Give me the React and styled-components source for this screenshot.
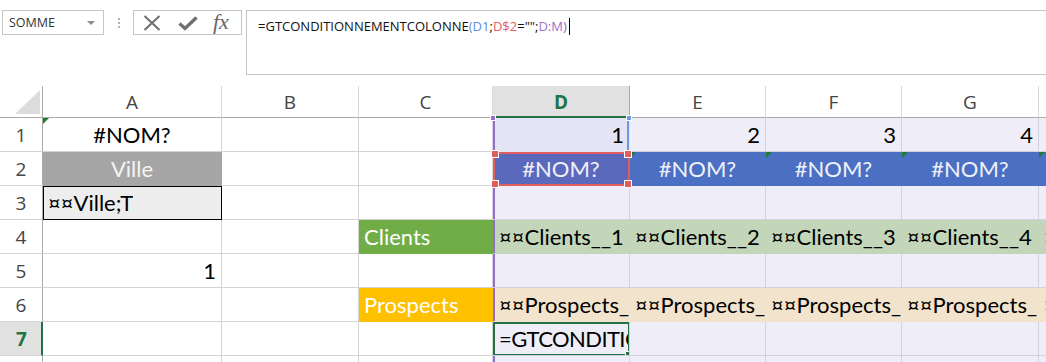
import React from 'react'
import styled, { createGlobalStyle } from 'styled-components'

const GlobalStyle = createGlobalStyle`
  html, body { margin:0; padding:0; background:#fff; overflow:hidden; }
  #root { width:1046px; height:362px; overflow:hidden; }
`

const TINT = '#efedf8'
const TINT_GRID = '#d3d0e2'
const GRID = '#d4d4d4'
const GREEN = '#217346'

const Page = styled.div`
  width:1046px;
  height:362px;
  display:flex;
  flex-direction:column;
  overflow:hidden;
`

//formula bar
const TopBar = styled.div`
  height:86px;
  flex:none;
  display:flex;
  align-items:flex-start;
  padding:10px 0 0 2px;
  box-sizing:border-box;
`
const NameBox = styled.div`
  width:102px;
  height:25px;
  border:1px solid #c6c6c6;
  box-sizing:border-box;
  display:flex;
  align-items:center;
  padding:0 8px 0 6px;
  font-family:"Open Sans", sans-serif;
  font-size:12.5px;
  color:#333;
  .arrow{
    margin-left:auto;
    width:0; height:0;
    border-left:4px solid transparent;
    border-right:4px solid transparent;
    border-top:4px solid #8a8a8a;
  }
`
const Grip = styled.div`
  width:29px;
  height:25px;
  display:flex;
  flex-direction:column;
  align-items:center;
  justify-content:center;
  gap:2px;
  span{ width:2px; height:2px; background:#b5b5b5; }
`
const FxBox = styled.div`
  width:109px;
  height:25px;
  border:1px solid #c6c6c6;
  box-sizing:border-box;
  display:flex;
  align-items:center;
  padding-left:9px;
  gap:16px;
  .fx{
    font-family:"Liberation Serif", serif;
    font-style:italic;
    font-size:22px;
    color:#666;
    line-height:1;
    margin-left:-2px;
    margin-top:-2px;
  }
`
const FormulaBox = styled.div`
  flex:1;
  height:65px;
  margin-left:4px;
  margin-right:-2px;
  border:1px solid #c6c6c6;
  box-sizing:border-box;
  padding:6px 11px;
  font-family:"Open Sans", sans-serif;
  font-size:13px;
  color:#111;
  white-space:nowrap;
  display:flex;
  align-items:flex-start;
`
const Ref = styled.span`
  color:${p => p.$c};
`
const Caret = styled.span`
  display:inline-block;
  width:1px;
  height:17px;
  background:#000;
  margin-left:2px;
  margin-top:1px;
`

//sheet
const Sheet = styled.div`
  display:grid;
  grid-template-columns:43px 179px 137px 134px 137px 136px 136px 137px 137px;
  grid-template-rows:32px repeat(8, 34px);
  width:1046px;
  overflow:hidden;
`
const Corner = styled.div`
  border-right:1px solid #ababab;
  border-bottom:1px solid #ababab;
  box-sizing:border-box;
  position:relative;
  &::after{
    content:'';
    position:absolute;
    right:2px; bottom:3px;
    width:0; height:0;
    border-left:25px solid transparent;
    border-bottom:24px solid #dcdcdc;
  }
`
const ColHeader = styled.div`
  box-sizing:border-box;
  border-right:1px solid ${p => p.$sel ? '#ababab' : '#dadada'};
  border-bottom:${p => p.$sel ? `2px solid ${GREEN}` : '1px solid #ababab'};
  background:${p => p.$sel ? '#e1e1e1' : '#fff'};
  color:${p => p.$sel ? GREEN : '#444'};
  font-weight:${p => p.$sel ? 700 : 400};
  font-family:"Open Sans", sans-serif;
  font-size:19px;
  display:flex;
  align-items:center;
  justify-content:center;
  padding-top:${p => p.$sel ? 1 : 0}px;
`
const RowHeader = styled.div`
  box-sizing:border-box;
  border-right:${p => p.$sel ? `2px solid ${GREEN}` : '1px solid #ababab'};
  border-bottom:1px solid #d4d4d4;
  background:${p => p.$sel ? '#e1e1e1' : '#fff'};
  color:${p => p.$sel ? GREEN : '#444'};
  font-weight:${p => p.$sel ? 700 : 400};
  font-family:"Open Sans", sans-serif;
  font-size:19px;
  display:flex;
  align-items:center;
  justify-content:center;
  padding-left:${p => p.$sel ? 2 : 0}px;
`

const shadows = p => {
  const s = []
  if (p.$range) s.push('inset 2px 0 0 #9270cc')
  if (p.$refRight) s.push('inset -2px 0 0 #6e98e2')
  if (p.$boxed) s.push('inset 1px 1px 0 #000')
  return s.length ? s.join(',') : 'none'
}

const Cell = styled.div`
  position:relative;
  box-sizing:border-box;
  min-width:0;
  overflow:${p => p.$clip ? 'hidden' : 'visible'};
  background:${p => p.$bg};
  border-right:1px solid ${p => p.$line};
  border-bottom:1px solid ${p => p.$line};
  box-shadow:${shadows};
  color:${p => p.$fg || '#000'};
  font-family:Lato, "Open Sans", sans-serif;
  font-size:22px;
  letter-spacing:${p => p.$tight ? '-0.6px' : 'normal'};
  white-space:nowrap;
  display:flex;
  align-items:center;
  justify-content:${p => ({ left: 'flex-start', center: 'center', right: 'flex-end' }[p.$align || 'left'])};
  padding:0 ${p => p.$align === 'right' ? 5 : 0}px 1px ${p => p.$align === 'left' || !p.$align ? (p.$range ? 6 : 5) : 0}px;
`
const Text = styled.span`
  overflow:hidden;
  display:block;
`
const ErrTri = styled.span`
  position:absolute;
  top:0; left:0;
  width:0; height:0;
  border-top:6px solid #1f7a36;
  border-right:6px solid transparent;
  z-index:2;
`
const Frame = styled.div`
  position:absolute;
  top:0;
  left:0;
  right:-1px;
  bottom:-1px;
  border:2px solid ${p => p.$c};
  pointer-events:none;
  z-index:3;
`
const Handle = styled.span`
  position:absolute;
  width:${p => p.$s}px;
  height:${p => p.$s}px;
  background:${p => p.$c};
  border:1px solid #fff;
  z-index:4;
  ${p => p.$v}:${p => -Math.ceil(p.$s / 2) - 1}px;
  ${p => p.$h}:${p => -Math.ceil(p.$s / 2) - 1}px;
`

const COLS = ['A', 'B', 'C', 'D', 'E', 'F', 'G', 'H']
const TINTED = ['D', 'E', 'F', 'G', 'H']

const FORMULA = '=GTCONDITIONNEMENTCOLONNE(D1;D$2="";D:M)'

const numbers = { D: '1', E: '2', F: '3', G: '4' }

const rows = [
  {
    n: 1,
    cells: {
      A: { text: '#NOM?', align: 'center', tri: true },
      ...Object.fromEntries(TINTED.map(c => [c, { text: numbers[c], align: 'right' }])),
      D: { text: '1', align: 'right', bg: '#e5e4f5', refRight: true, blueHandles: true },
    },
  },
  {
    n: 2,
    cells: {
      A: { text: 'Ville', align: 'center', bg: '#a6a6a6', fg: '#f4f4f4' },
      ...Object.fromEntries(TINTED.map(c => [c, { text: c === 'H' ? '' : '#NOM?', align: 'center', bg: '#4a6fc3', fg: '#f0f0f8', tri: c !== 'D' }])),
      D: { text: '#NOM?', align: 'center', bg: '#5b69bd', fg: '#f0f0f8', redFrame: true },
    },
  },
  {
    n: 3,
    cells: {
      A: { text: '¤¤Ville;T', bg: '#ededed', boxed: true },
    },
  },
  {
    n: 4,
    cells: {
      C: { text: 'Clients', bg: '#70ad47', fg: '#fff' },
      ...Object.fromEntries(TINTED.map((c, i) => [c, { text: c === 'H' ? '¤' : '¤¤Clients__' + (i + 1), bg: '#c3d6b9', clip: true }])),
    },
  },
  {
    n: 5,
    cells: {
      A: { text: '1', align: 'right' },
    },
  },
  {
    n: 6,
    cells: {
      C: { text: 'Prospects', bg: '#ffc000', fg: '#fff' },
      ...Object.fromEntries(TINTED.map(c => [c, { text: c === 'H' ? '¤' : '¤¤Prospects_', bg: '#f2e3cd', clip: true }])),
    },
  },
  {
    n: 7,
    sel: true,
    cells: {
      D: { text: '=GTCONDITIO', clip: true, active: true, tight: true },
    },
  },
  { n: 8, cells: {} },
]

const CheckIcon = () => (
  <svg width="22" height="16" viewBox="0 0 22 16">
    <path d="M2.5 8.5 L8 13.5 L19.5 2.5" fill="none" stroke="#707070" strokeWidth="3.4" />
  </svg>
)
const CrossIcon = () => (
  <svg width="18" height="16" viewBox="0 0 18 16">
    <path d="M1.5 1 L16.5 15 M16.5 1 L1.5 15" fill="none" stroke="#6e6e6e" strokeWidth="2" />
  </svg>
)

const renderCell = (row, col) => {
  const d = row.cells[col] || {}
  const tinted = TINTED.includes(col)
  const bg = d.bg || (tinted ? TINT : '#fff')
  const line = d.boxed ? '#000' : d.bg ? d.bg : tinted ? TINT_GRID : GRID
  return (
    <Cell
      key={row.n + col}
      $bg={bg}
      $fg={d.fg}
      $line={line}
      $align={d.align}
      $clip={d.clip}
      $tight={d.tight}
      $range={col === 'D'}
      $refRight={d.refRight}
      $boxed={d.boxed}
    >
      {d.tri && <ErrTri />}
      {d.text && <Text>{d.text}</Text>}
      {d.redFrame && (
        <Frame $c="#e35d5d">
          <Handle $c="#e35d5d" $s={6} $v="top" $h="left" />
          <Handle $c="#e35d5d" $s={6} $v="top" $h="right" />
          <Handle $c="#e35d5d" $s={6} $v="bottom" $h="left" />
          <Handle $c="#e35d5d" $s={6} $v="bottom" $h="right" />
        </Frame>
      )}
      {d.blueHandles && (
        <>
          <Handle $c="#9270cc" $s={4} $v="top" $h="left" />
          <Handle $c="#6e98e2" $s={4} $v="top" $h="right" />
        </>
      )}
      {d.active && (
        <Frame $c={GREEN}>
          <Handle $c={GREEN} $s={5} $v="bottom" $h="right" />
        </Frame>
      )}
    </Cell>
  )
}

export default function App() {
  return (
    <Page>
      <GlobalStyle />
      <TopBar>
        <NameBox>
          SOMME
          <span className="arrow" />
        </NameBox>
        <Grip>
          <span />
          <span />
          <span />
        </Grip>
        <FxBox>
          <CrossIcon />
          <CheckIcon />
          <span className="fx">fx</span>
        </FxBox>
        <FormulaBox>
          =GTCONDITIONNEMENTCOLONNE<Ref $c="#6f8fc4">(</Ref>
          <Ref $c="#5b8fe0">D1</Ref>;<Ref $c="#e05c5c">D$2</Ref>="";<Ref $c="#9c6fcd">D:M</Ref>
          <Ref $c="#8a6cb8">)</Ref>
          <Caret />
        </FormulaBox>
      </TopBar>
      <Sheet>
        <Corner />
        {COLS.map(c => (
          <ColHeader key={c} $sel={c === 'D'}>{c === 'H' ? '' : c}</ColHeader>
        ))}
        {rows.map(row => (
          <React.Fragment key={row.n}>
            <RowHeader $sel={row.sel}>{row.n}</RowHeader>
            {COLS.map(col => renderCell(row, col))}
          </React.Fragment>
        ))}
      </Sheet>
    </Page>
  )
}
